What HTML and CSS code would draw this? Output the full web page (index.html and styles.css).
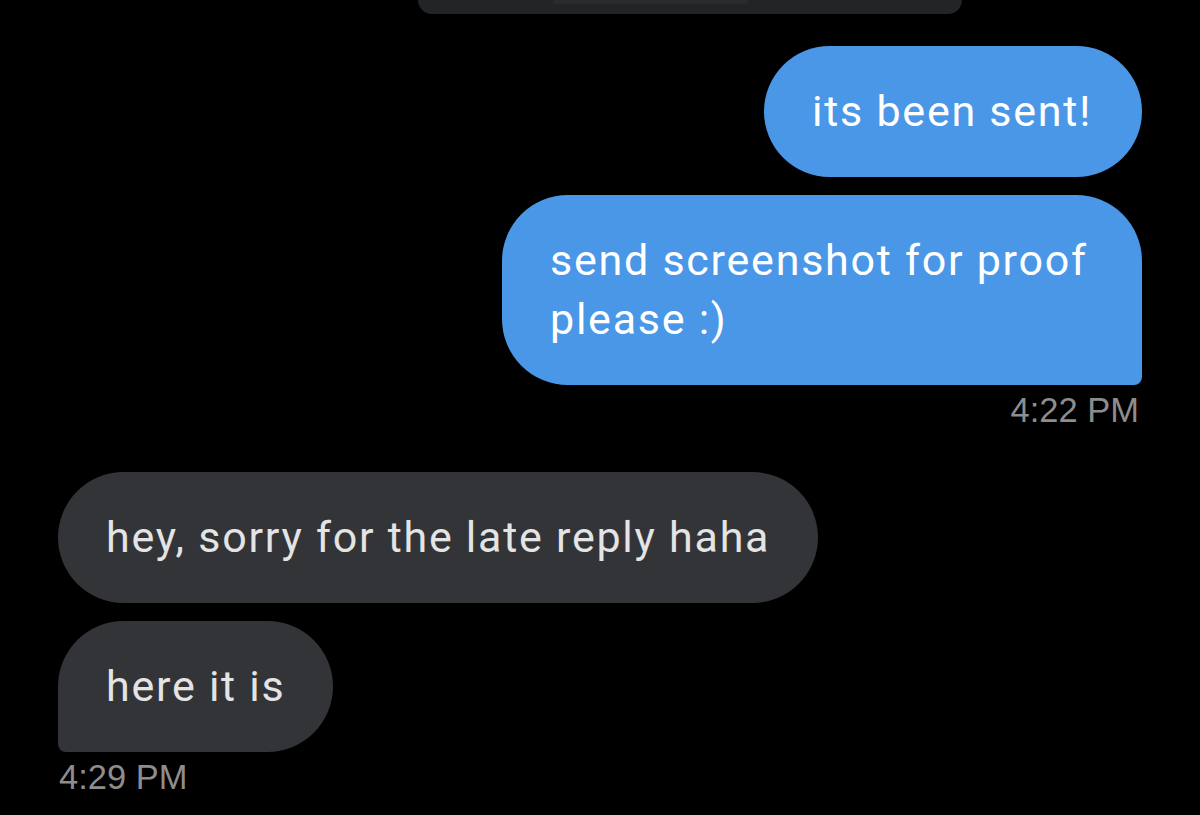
FILE: index.html
```html
<!DOCTYPE html>
<html lang="en">
<head>
    <meta charset="UTF-8">
    <meta name="viewport" content="width=device-width, initial-scale=1.0">
    <title>Messages</title>
    <link rel="stylesheet" href="styles.css">
</head>
<body>
    <div class="thread">
        <div class="prev-bubble">
            <div class="prev-inner"></div>
        </div>

        <div class="group outgoing">
            <div class="bubble sent single">its been sent!</div>
            <div class="bubble sent last">send screenshot for proof please :)</div>
            <div class="time">4:22 PM</div>
        </div>

        <div class="group incoming">
            <div class="bubble received single">hey, sorry for the late reply haha</div>
            <div class="bubble received last">here it is</div>
            <div class="time">4:29 PM</div>
        </div>
    </div>
</body>
</html>
```

FILE: styles.css
```css
body {
    margin: 0;
    background: #000;
    font-family: 'Roboto', 'Liberation Sans', sans-serif;
    overflow: hidden;
}
.thread {
    display: flex;
    flex-direction: column;
    padding: 0 58px;
}
.prev-bubble {
    width: 544px;
    height: 14px;
    margin-left: 360px;
    background: #232428;
    border-radius: 0 0 30px 30px;
    display: flex;
    justify-content: center;
}
.prev-inner {
    width: 195px;
    height: 4px;
    margin-left: -80px;
    background: #2a2b2f;
    border-radius: 0 0 10px 10px;
}
.group {
    display: flex;
    flex-direction: column;
    gap: 18px;
}
.outgoing {
    align-items: flex-end;
    margin-top: 32px;
}
.incoming {
    align-items: flex-start;
    margin-top: 42px;
}
.bubble {
    box-sizing: border-box;
    padding: 36px 48px;
    font-size: 43px;
    line-height: 59px;
    letter-spacing: 1.75px;
    border-radius: 66px;
}
.sent {
    background: #4a97e8;
    color: #fff;
    max-width: 640px;
    padding-right: 50px;
}
.received {
    background: #323438;
    color: #e4e4e4;
    max-width: 780px;
}
.sent.last {
    border-bottom-right-radius: 8px;
}
.received.last {
    border-bottom-left-radius: 8px;
}
.time {
    font-family: 'Liberation Sans', Arial, sans-serif;
    font-size: 34.5px;
    line-height: 40px;
    color: #8d8d8d;
    margin-top: -13px;
    padding: 0 3px 0 1px;
}
```
